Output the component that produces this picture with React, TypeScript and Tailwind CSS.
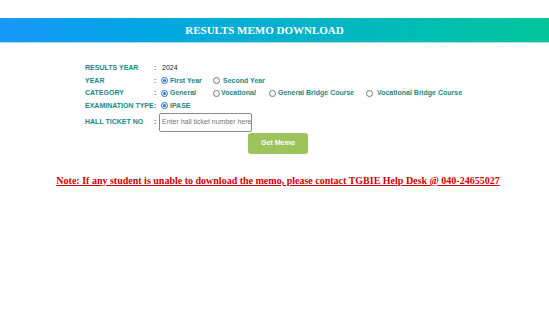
function Radio({ checked }: { checked?: boolean }) {
  return checked ? (
    <span className="inline-block h-[7px] w-[7px] shrink-0 rounded-full border border-[#1f6fe0] bg-white p-[1px]">
      <span className="block h-full w-full rounded-full bg-[#1a73e8]" />
    </span>
  ) : (
    <span className="inline-block h-[7px] w-[7px] shrink-0 rounded-full border border-[#767676] bg-white" />
  )
}

function Option({
  label,
  checked,
  width,
  gap = "gap-[2px]",
}: {
  label: string
  checked?: boolean
  width: string
  gap?: string
}) {
  return (
    <span className={`flex shrink-0 items-center whitespace-nowrap ${gap} ${width}`}>
      <Radio checked={checked} />
      <span>{label}</span>
    </span>
  )
}

function Row({
  label,
  children,
  className = "h-[12.5px]",
}: {
  label: string
  children: React.ReactNode
  className?: string
}) {
  return (
    <div className={`flex items-center whitespace-nowrap ${className}`}>
      <span className="w-[69px] shrink-0">{label}</span>
      <span className="w-[7px] shrink-0">:</span>
      <div className="flex items-center">{children}</div>
    </div>
  )
}

export default function App() {
  return (
    <div className="min-h-[309px] w-[549px] bg-white font-['Liberation_Sans',Arial,sans-serif]">
      <div className="h-[18px]" />
      <div className="flex h-[25px] items-center justify-center border-b-[1.5px] border-[#a8e6ee] bg-gradient-to-r from-[#1898fb] to-[#04c59a] pr-[20px]">
        <h1 className="font-['Liberation_Serif','Times_New_Roman',serif] text-[11px] font-bold text-white">
          RESULTS MEMO DOWNLOAD
        </h1>
      </div>

      <div className="ml-[85px] mt-[19px] text-[7px] font-bold text-[#1a8888]">
        <Row label="RESULTS YEAR">
          <span className="ml-[1px] font-normal text-[#222]">2024</span>
        </Row>
        <Row label="YEAR">
          <Option label="First Year" checked width="w-[52px]" />
          <Option label="Second Year" width="w-[60px]" gap="gap-[3px]" />
        </Row>
        <Row label="CATEGORY">
          <Option label="General" checked width="w-[52px]" />
          <Option label="Vocational" width="w-[56px]" gap="gap-[1px]" />
          <Option label="General Bridge Course" width="w-[97px]" gap="gap-[2px]" />
          <Option label="Vocational Bridge Course" width="w-[100px]" gap="gap-[4px]" />
        </Row>
        <Row label="EXAMINATION TYPE">
          <Option label="IPASE" checked width="w-[40px]" />
        </Row>
        <Row label="HALL TICKET NO" className="h-[20px]">
          <div className="-ml-[2px] flex h-[19px] w-[93px] items-center overflow-hidden whitespace-nowrap rounded-[2px] border border-[#8a8a8a] px-[2px] text-[7px] font-normal text-[#777]">
            Enter hall ticket number here
          </div>
        </Row>
        <div className="ml-[163px] mt-[1px] flex h-[21px] w-[60px] items-center justify-center rounded-[3px] bg-[#9cc35c] text-[7px] font-bold text-white">
          Get Memo
        </div>
      </div>

      <p className="mt-[19px] pl-[7px] text-center font-['Liberation_Serif','Times_New_Roman',serif] text-[10px] font-bold text-[#d40000] underline">
        Note: If any student is unable to download the memo, please contact TGBIE Help Desk @ 040-24655027
      </p>
    </div>
  )
}
